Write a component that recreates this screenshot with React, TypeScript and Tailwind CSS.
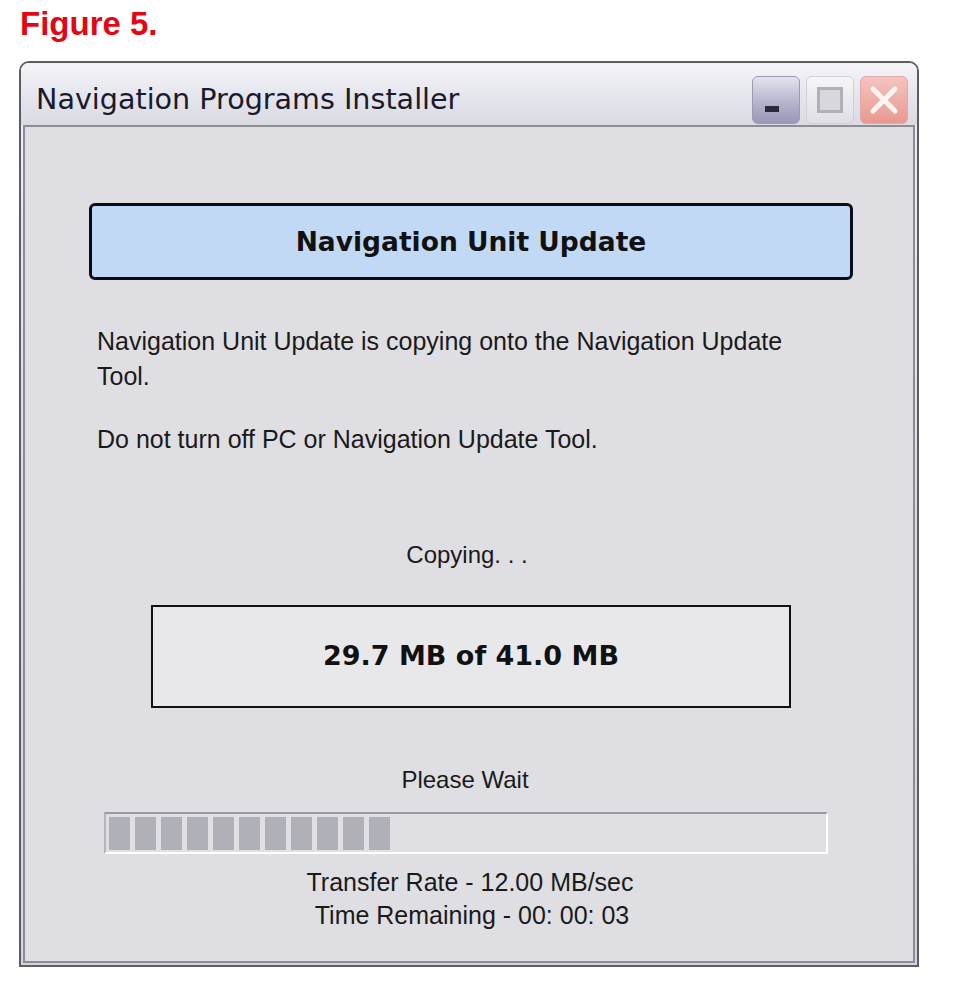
import React from "react";

export default function App() {
  const blocks = Array.from({ length: 11 });
  return (
    <div className="w-[954px] h-[988px] bg-white overflow-hidden" style={{ fontFamily: '"Liberation Sans", Arial, sans-serif' }}>
      <div className="pl-[20px] pt-[5px] h-[61px] text-[33px] leading-[38px] font-bold text-[#e30613]" style={{ fontFamily: '"Liberation Sans", Arial, sans-serif' }}>
        Figure 5.
      </div>
      <div className="ml-[19px] w-[900px] h-[906px] border-2 border-[#5c5c64] rounded-t-[10px] bg-gradient-to-b from-[#eeeef4] via-[#dcdce6] to-[#d4d4dc] flex flex-col">
        {/* title bar */}
        <div className="h-[62px] flex items-center pl-[15px] pr-[9px] shrink-0 bg-gradient-to-b from-[#f4f4f8] via-[#e6e6ee] to-[#dadae2] rounded-t-[8px]">
          <div className="flex-1 text-[28.6px] text-[#1a1a2a] pt-[10px]" style={{ fontFamily: '"DejaVu Sans", Verdana, sans-serif' }}>
            Navigation Programs Installer
          </div>
          <div className="flex gap-[6px] pt-[12px]">
            <div className="w-[48px] h-[48px] rounded-[6px] border border-[#9a9ab0] bg-gradient-to-b from-[#e4e4f0] via-[#b8b8d0] to-[#9898b8] relative">
              <div className="absolute left-[12px] bottom-[11px] w-[14px] h-[6px] bg-[#2a2a3a]" />
            </div>
            <div className="w-[48px] h-[48px] rounded-[6px] border border-[#d0d0d8] bg-gradient-to-b from-[#f6f6f8] to-[#dedee4] flex items-center justify-center">
              <div className="w-[26px] h-[26px] border-[3px] border-[#b0b0b8] bg-[#d8d8dc]" />
            </div>
            <div className="w-[48px] h-[48px] rounded-[6px] border border-[#e0a8a8] bg-gradient-to-b from-[#f4c4c0] to-[#e89890] flex items-center justify-center">
              <svg width="34" height="34" viewBox="0 0 34 34">
                <path d="M6 6 L28 28 M28 6 L6 28" stroke="#fff6f4" strokeWidth="5" strokeLinecap="round" />
              </svg>
            </div>
          </div>
        </div>
        {/* client */}
        <div className="mx-[2px] mb-[2px] flex-1 border-2 border-[#8c8c94] bg-[#dfdfe3] flex flex-col items-start" style={{ fontFamily: '"Liberation Sans", Arial, sans-serif' }}>
          <div className="ml-[64px] mt-[76px] w-[764px] h-[77px] bg-[#c2d9f5] border-[3px] border-[#0c0c18] rounded-[6px] flex items-center justify-center">
            <span className="text-[26.5px] font-bold text-[#111]" style={{ fontFamily: '"DejaVu Sans", Verdana, sans-serif' }}>
              Navigation Unit Update
            </span>
          </div>
          <div className="ml-[72px] mt-[44px] w-[710px] text-[25px] leading-[35px] text-[#1a1a1a]">
            Navigation Unit Update is copying onto the Navigation Update Tool.
          </div>
          <div className="ml-[72px] mt-[28px] text-[25px] leading-[35px] text-[#1a1a1a]">
            Do not turn off PC or Navigation Update Tool.
          </div>
          <div className="self-stretch text-center mt-[80px] text-[24px] leading-[35px] text-[#1a1a1a] pr-[4px]">
            Copying. . .
          </div>
          <div className="ml-[126px] mt-[33px] w-[640px] h-[103px] bg-[#e8e8ea] border-2 border-[#111] flex items-center justify-center">
            <span className="text-[27px] font-bold text-[#111]" style={{ fontFamily: '"DejaVu Sans", Verdana, sans-serif' }}>
              29.7 MB of 41.0 MB
            </span>
          </div>
          <div className="self-stretch text-center mt-[54px] text-[24px] leading-[35px] text-[#1a1a1a] pr-[8px]">
            Please Wait
          </div>
          <div className="ml-[79px] mt-[15px] w-[724px] h-[42px] border-t-2 border-l-2 border-t-[#9a9aa0] border-l-[#b4b4ba] border-b-2 border-r-2 border-b-white border-r-white bg-[#e0e0e4] flex items-center gap-[5px] pl-[3px]">
            {blocks.map((_, i) => (
              <div key={i} className="w-[21px] h-[33px] bg-[#b0b0b8]" />
            ))}
          </div>
          <div className="self-stretch text-center mt-[12px] text-[25px] leading-[33px] text-[#1a1a1a] pl-[2px]">
            Transfer Rate - 12.00 MB/sec
          </div>
          <div className="self-stretch text-center text-[25px] leading-[33px] text-[#1a1a1a] pl-[6px]">
            Time Remaining - 00: 00: 03
          </div>
        </div>
      </div>
    </div>
  );
}
